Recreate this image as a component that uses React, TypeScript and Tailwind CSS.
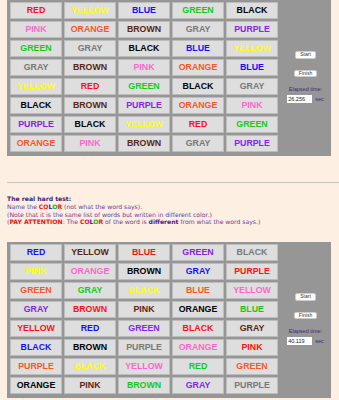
import React from "react";

const C: Record<string, string> = {
  RED: "text-[#ff1111]",
  YELLOW: "text-[#ffff00]",
  BLUE: "text-[#1111ff]",
  GREEN: "text-[#11cc11]",
  BLACK: "text-[#000000]",
  PINK: "text-[#ff66cc]",
  ORANGE: "text-[#ff5522]",
  BROWN: "text-[#5c2410]",
  GRAY: "text-[#777777]",
  PURPLE: "text-[#8822ee]",
};

const words = [
  ["RED", "YELLOW", "BLUE", "GREEN", "BLACK"],
  ["PINK", "ORANGE", "BROWN", "GRAY", "PURPLE"],
  ["GREEN", "GRAY", "BLACK", "BLUE", "YELLOW"],
  ["GRAY", "BROWN", "PINK", "ORANGE", "BLUE"],
  ["YELLOW", "RED", "GREEN", "BLACK", "GRAY"],
  ["BLACK", "BROWN", "PURPLE", "ORANGE", "PINK"],
  ["PURPLE", "BLACK", "YELLOW", "RED", "GREEN"],
  ["ORANGE", "PINK", "BROWN", "GRAY", "PURPLE"],
];

const hardColors = [
  ["BLUE", "BROWN", "RED", "PURPLE", "GRAY"],
  ["YELLOW", "PINK", "BLACK", "BLUE", "RED"],
  ["ORANGE", "GREEN", "YELLOW", "ORANGE", "PINK"],
  ["PURPLE", "RED", "BROWN", "BLACK", "GREEN"],
  ["RED", "BLUE", "PURPLE", "RED", "BROWN"],
  ["BLUE", "BLACK", "GRAY", "PINK", "RED"],
  ["ORANGE", "YELLOW", "PINK", "GREEN", "ORANGE"],
  ["BLACK", "BROWN", "GREEN", "PURPLE", "GRAY"],
];

function Color() {
  return (
    <b>
      <span className="text-[#ff1111]">C</span>
      <span className="text-[#ff1111]">O</span>
      <span className="text-[#1111ff]">L</span>
      <span className="text-[#11aa11]">O</span>
      <span className="text-[#ff1111]">R</span>
    </b>
  );
}

function Panel({ colors, time }: { colors: string[][]; time: string }) {
  return (
    <div className="flex w-[324px] bg-[#969696] pl-[3px] pt-[2px] pb-[4px]">
      <div className="grid grid-cols-[repeat(5,52px)] gap-[2px]">
        {words.map((row, r) =>
          row.map((w, c) => (
            <div
              key={r + "-" + c}
              className={`flex h-[17px] items-center justify-center border border-[#bcbcbc] bg-[#dedede] text-[8.8px] font-bold ${C[colors[r][c]]}`}
            >
              {w}
            </div>
          ))
        )}
      </div>
      <div className="flex flex-1 flex-col items-center justify-center pl-[2px] font-['Liberation_Sans',sans-serif]">
        <button className="flex h-[8px] w-[21px] items-center justify-center rounded-[2px] border border-[#cccccc] bg-white text-[5px] leading-none text-[#333]">
          Start
        </button>
        <button className="mt-[11px] flex h-[7px] w-[23px] items-center justify-center rounded-[2px] border border-[#cccccc] bg-white text-[5px] leading-none text-[#333]">
          Finish
        </button>
        <div className="mt-[10px] text-[5.5px] leading-none text-[#3b2c6e]">Elapsed time:</div>
        <div className="mt-[3px] flex items-center gap-[3px]">
          <div className="flex h-[8px] w-[25px] items-center bg-white pl-[1px] text-[5.5px] leading-none text-[#222]">
            {time}
          </div>
          <span className="text-[5.5px] leading-none text-[#3b2c6e]">sec</span>
        </div>
      </div>
    </div>
  );
}

export default function App() {
  return (
    <div className="h-[400px] w-[339px] overflow-hidden bg-[#fdefe1] pl-[7px] font-['Liberation_Sans',sans-serif]">
      <Panel colors={words} time="26.256" />
      <div className="mt-[26px] h-[2px] w-[340px] border-t border-[#c9c5c0] bg-[#f4eee8]" />
      <div className="mt-[11px] whitespace-nowrap font-['DejaVu_Sans',sans-serif] text-[6.1px] leading-[7.8px] text-[#6a3aa0]">
        <div className="font-bold text-[#3d1a78]">The real hard test:</div>
        <div>
          Name the <Color /> (not what the word says).
        </div>
        <div>(Note that it is the same list of words but written in different color.)</div>
        <div>
          (<b className="text-[#ee1111]">PAY ATTENTION</b>: The <Color /> of the word is{" "}
          <b className="text-[#4a1a8a]">different</b> from what the word says.)
        </div>
      </div>
      <div className="mt-[16px]">
        <Panel colors={hardColors} time="40.119" />
      </div>
    </div>
  );
}
